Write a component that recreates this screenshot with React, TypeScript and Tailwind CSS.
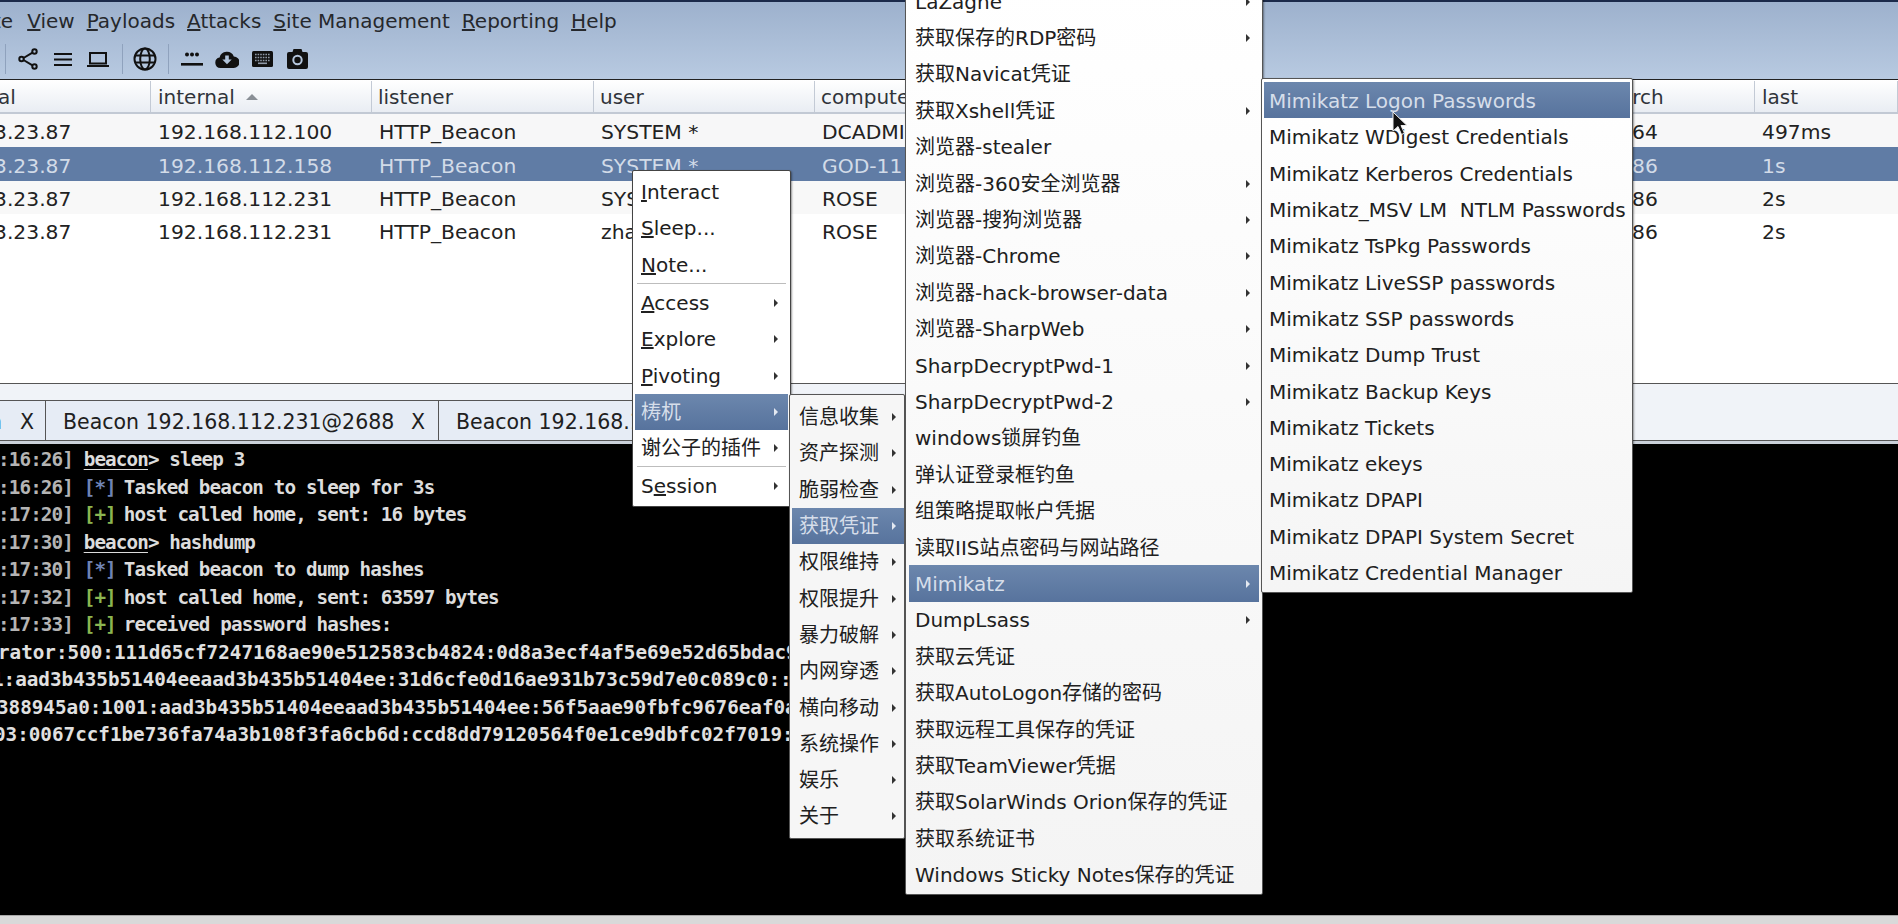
import type { ReactNode } from "react";

const FONT = { fontFamily: '"DejaVu Sans", "Noto Sans CJK SC", sans-serif' };

const columns = [
  { label: "al", w: "w-[151px]", pad: "pl-0 -ml-[2px]" },
  { label: "internal", w: "w-[221px]", pad: "pl-[7px]" },
  { label: "listener", w: "w-[222px]", pad: "pl-[6px]" },
  { label: "user", w: "w-[221px]", pad: "pl-[6px]" },
  { label: "computer", w: "w-[221px]", pad: "pl-[6px]" },
  { label: "note", w: "w-[221px]", pad: "pl-[6px]" },
  { label: "process", w: "w-[178px]", pad: "pl-[6px]" },
  { label: "pid", w: "w-[178px]", pad: "pl-[6px]" },
  { label: "arch", w: "w-[142px]", pad: "pl-[7px]" },
  { label: "last", w: "w-[143px]", pad: "pl-[7px]" },
];

const rows = [
  ["3.23.87", "192.168.112.100", "HTTP_Beacon", "SYSTEM *", "DCADMIN", "", "", "", "x64", "497ms"],
  ["3.23.87", "192.168.112.158", "HTTP_Beacon", "SYSTEM *", "GOD-11", "", "", "", "x86", "1s"],
  ["3.23.87", "192.168.112.231", "HTTP_Beacon", "SYSTEM *", "ROSE", "", "", "", "x86", "2s"],
  ["3.23.87", "192.168.112.231", "HTTP_Beacon", "zhangsan", "ROSE", "", "", "", "x86", "2s"],
];

function Arrow({ light }: { light?: boolean }) {
  return (
    <span
      className={
        "block border-y-[4px] border-y-transparent border-l-[4px] " +
        (light ? "border-l-[#e4e9f1]" : "border-l-[#333333]")
      }
    />
  );
}

type ItemProps = {
  label: ReactNode;
  arrow?: boolean;
  active?: boolean;
  pad: string;
};

function Item({ label, arrow, active, pad }: ItemProps) {
  return (
    <div
      className={
        "flex items-center justify-between whitespace-nowrap " +
        pad +
        (active ? " bg-gradient-to-b from-[#6c87ad] to-[#57739d] text-[#d6deea]" : " text-[#202020]")
      }
    >
      <span>{label}</span>
      {arrow ? <Arrow light={active} /> : null}
    </div>
  );
}

function Sep({ gap }: { gap?: boolean }) {
  return <div className={"mx-[2px] h-[1px] bg-[#bdbdbd] " + (gap ? "mb-[1px]" : "")} />;
}

const menu3 = [
  { t: "LaZagne", a: true },
  { t: "获取保存的RDP密码", a: true },
  { t: "获取Navicat凭证" },
  { t: "获取Xshell凭证", a: true },
  { t: "浏览器-stealer" },
  { t: "浏览器-360安全浏览器", a: true },
  { t: "浏览器-搜狗浏览器", a: true },
  { t: "浏览器-Chrome", a: true },
  { t: "浏览器-hack-browser-data", a: true },
  { t: "浏览器-SharpWeb", a: true },
  { t: "SharpDecryptPwd-1", a: true },
  { t: "SharpDecryptPwd-2", a: true },
  { t: "windows锁屏钓鱼" },
  { t: "弹认证登录框钓鱼" },
  { t: "组策略提取帐户凭据" },
  { t: "读取IIS站点密码与网站路径" },
  { t: "Mimikatz", a: true, active: true },
  { t: "DumpLsass", a: true },
  { t: "获取云凭证" },
  { t: "获取AutoLogon存储的密码" },
  { t: "获取远程工具保存的凭证" },
  { t: "获取TeamViewer凭据" },
  { t: "获取SolarWinds Orion保存的凭证" },
  { t: "获取系统证书" },
  { t: "Windows Sticky Notes保存的凭证" },
];

const menu2 = ["信息收集", "资产探测", "脆弱检查", "获取凭证", "权限维持", "权限提升", "暴力破解", "内网穿透", "横向移动", "系统操作", "娱乐", "关于"];

const menu4 = [
  "Mimikatz Logon Passwords",
  "Mimikatz WDigest Credentials",
  "Mimikatz Kerberos Credentials",
  "Mimikatz_MSV LM\u00a0 NTLM Passwords",
  "Mimikatz TsPkg Passwords",
  "Mimikatz LiveSSP passwords",
  "Mimikatz SSP passwords",
  "Mimikatz Dump Trust",
  "Mimikatz Backup Keys",
  "Mimikatz Tickets",
  "Mimikatz ekeys",
  "Mimikatz DPAPI",
  "Mimikatz DPAPI System Secret",
  "Mimikatz Credential Manager",
];

const logLine = "h-[27.5px] whitespace-pre text-[19.25px] leading-[27.5px] tracking-[-0.88px] text-[#dcdcdc]";

function Stamp({ t }: { t: string }) {
  return <span className="text-[#b4b4b4]">{t + "] "}</span>;
}

function Task({ t, text }: { t: string; text: string }) {
  return (
    <div className={logLine}>
      <Stamp t={t} />
      <span className="text-[#6f83b4]">[*]</span>
      <span className="ml-[8px]">{text}</span>
    </div>
  );
}

function Good({ t, text }: { t: string; text: string }) {
  return (
    <div className={logLine}>
      <Stamp t={t} />
      <span className="text-[#8bb650]">[+]</span>
      <span className="ml-[8px]">{text}</span>
    </div>
  );
}

function Input({ t, text }: { t: string; text: string }) {
  return (
    <div className={logLine}>
      <Stamp t={t} />
      <span className="underline underline-offset-[3px]">beacon</span>
      {"> " + text}
    </div>
  );
}

function Hash({ text, shift }: { text: string; shift: string }) {
  return (
    <div className={"h-[27.5px] whitespace-pre text-[19.25px] leading-[27.5px] text-[#e0e0e0] " + shift}>{text}</div>
  );
}

export default function App() {
  return (
    <div style={FONT} className="relative flex h-[924px] w-[1898px] flex-col overflow-hidden bg-white text-[20px] text-[#202020]">
      {/* menu + toolbar */}
      <div className="h-[80px] shrink-0 border-t-[2px] border-b-[1px] border-t-[#1b2a4a] border-b-[#222222] bg-gradient-to-b from-[#9db1cd] to-[#b8cae1]">
        <div className="flex h-[37px] items-center gap-[12px] text-[#26282c]">
          <span className="-ml-[7px] mr-[2px]">te</span>
          <span><u>V</u>iew</span>
          <span><u>P</u>ayloads</span>
          <span><u>A</u>ttacks</span>
          <span><u>S</u>ite Management</span>
          <span><u>R</u>eporting</span>
          <span><u>H</u>elp</span>
        </div>
        <div className="flex h-[40px] items-center">
          <div className="ml-[5px] h-[30px] w-[1px] bg-[#8fa2bd]" />
          <svg className="ml-[12px]" width="20" height="22" viewBox="0 0 20 22" fill="none" stroke="#111" strokeWidth="2">
            <circle cx="16.5" cy="3.5" r="2.2" />
            <circle cx="3.5" cy="11" r="2.2" />
            <circle cx="16.5" cy="18.5" r="2.2" />
            <path d="M5.5 10 14.5 4.6M5.5 12 14.5 17.4" />
          </svg>
          <svg className="ml-[16px]" width="18" height="13" viewBox="0 0 18 13" fill="#111">
            <rect y="0" width="18" height="2" />
            <rect y="5.5" width="18" height="2" />
            <rect y="11" width="18" height="2" />
          </svg>
          <svg className="ml-[15px]" width="22" height="15" viewBox="0 0 22 15" fill="none" stroke="#111" strokeWidth="2">
            <rect x="3" y="1" width="16" height="10.5" />
            <path d="M0 14h22" />
          </svg>
          <div className="ml-[13px] h-[30px] w-[1px] bg-[#8fa2bd]" />
          <svg className="ml-[10px]" width="24" height="24" viewBox="0 0 24 24" fill="none" stroke="#111" strokeWidth="2">
            <circle cx="12" cy="12" r="10.5" />
            <ellipse cx="12" cy="12" rx="4.8" ry="10.5" />
            <path d="M2 8.5h20M2 15.5h20" />
          </svg>
          <div className="ml-[11px] h-[30px] w-[1px] bg-[#8fa2bd]" />
          <svg className="ml-[12px]" width="22" height="14" viewBox="0 0 22 14" fill="#111">
            <circle cx="6" cy="2.5" r="2" />
            <circle cx="11" cy="2.5" r="2" />
            <circle cx="16" cy="2.5" r="2" />
            <rect x="0" y="11" width="22" height="2.6" />
          </svg>
          <svg className="ml-[12px]" width="24" height="17" viewBox="0 0 24 17">
            <path d="M5.5 17A5.3 5.3 0 0 1 4.6 6.5 7.5 7.5 0 0 1 18.8 5.4 5.8 5.8 0 0 1 18.6 17Z" fill="#111" />
            <path d="M10.2 4.5h3.6v4h2.9L12 13.2 7.3 8.5h2.9Z" fill="#b0c3da" />
          </svg>
          <svg className="ml-[13px]" width="21" height="16" viewBox="0 0 21 16">
            <rect width="21" height="16" rx="1.5" fill="#111" />
            <path d="M3 3.5h15M3 6.5h15M3 9.5h15" stroke="#8f9aa8" strokeWidth="1.4" strokeDasharray="1.6 1" />
            <rect x="6" y="11.5" width="9" height="1.6" fill="#8f9aa8" />
          </svg>
          <svg className="ml-[14px]" width="21" height="20" viewBox="0 0 21 20">
            <path d="M5.5 3 6.5 0h8l1 3H19a2 2 0 0 1 2 2v13a2 2 0 0 1-2 2H2a2 2 0 0 1-2-2V5a2 2 0 0 1 2-2Z" fill="#111" />
            <circle cx="10.5" cy="11" r="4.2" fill="none" stroke="#b5c6dc" strokeWidth="2" />
          </svg>
        </div>
      </div>

      {/* beacon table */}
      <div className="h-[304px] shrink-0 border-b-[1px] border-b-[#555555] bg-white">
        <div className="flex h-[34px] border-b-[2px] border-b-[#c2c9d4] bg-gradient-to-b from-white to-[#e9edf3] pt-[1px] text-[#30343a]">
          {columns.map((c) => (
            <div key={c.label} className={"flex shrink-0 items-center border-r-[1px] border-r-[#c3cad5] " + c.w}>
              <span className={c.pad}>{c.label}</span>
              {c.label === "internal" ? (
                <span className="ml-[11px] block border-x-[6px] border-b-[6px] border-x-transparent border-b-[#8a8f96]" />
              ) : null}
            </div>
          ))}
        </div>
        {rows.map((r, i) => (
          <div
            key={i}
            className={
              "flex h-[33.3px] items-center pt-[4px] text-[20.3px] " +
              (i === 1
                ? "bg-[#607ca5] text-[#d2dbe8]"
                : i === 0
                ? "bg-[#f7f7f8] text-[#222222]"
                : i === 2
                ? "bg-[#f8f8f8] text-[#222222]"
                : "bg-white text-[#222222]")
            }
          >
            {r.map((v, j) => (
              <div key={j} className={"shrink-0 whitespace-nowrap " + columns[j].w}>
                <span className={j === 0 ? "block -ml-[6px]" : "block pl-[7px]"}>{v}</span>
              </div>
            ))}
          </div>
        ))}
      </div>

      {/* tab strip */}
      <div className="h-[57px] shrink-0 bg-[#f0f3f8] pt-[16px] text-[20.5px]">
        <div className="flex h-[41px] items-stretch">
          <div className="flex w-[46px] shrink-0 items-center overflow-hidden border-t-[1px] border-r-[1px] border-b-[1px] border-[#555555] bg-[#e6ecf5] pt-[3px]">
            <span className="-ml-[11px] w-[31px] text-[#2b5cab]">n</span>
            <span>X</span>
          </div>
          <div className="flex w-[393px] shrink-0 items-center justify-between border-t-[1px] border-r-[1px] border-b-[1px] border-[#555555] bg-[#e6ecf5] pt-[3px] pr-[13px] pl-[17px]">
            <span>Beacon 192.168.112.231@2688</span>
            <span>X</span>
          </div>
          <div className="flex w-[393px] shrink-0 items-center justify-between overflow-hidden border-t-[1px] border-b-[1px] border-[#555555] bg-[#e6ecf5] pt-[3px] pl-[17px] whitespace-nowrap">
            <span>Beacon 192.168.112.231@3120</span>
          </div>
          <div className="flex-1 border-b-[1px] border-[#555555]" />
        </div>
      </div>

      {/* console */}
      <div className="flex-1 overflow-hidden border-t-[3px] border-t-[#c9d0d9] bg-black pt-[2px] font-bold" style={{ fontFamily: '"DejaVu Sans Mono", monospace' }}>
        <div className="-ml-[2px]">
          <Input t=":16:26" text="sleep 3" />
          <Task t=":16:26" text="Tasked beacon to sleep for 3s" />
          <Good t=":17:20" text="host called home, sent: 16 bytes" />
          <Input t=":17:30" text="hashdump" />
          <Task t=":17:30" text="Tasked beacon to dump hashes" />
          <Good t=":17:32" text="host called home, sent: 63597 bytes" />
          <Good t=":17:33" text="received password hashes:" />
        </div>
        <Hash shift="-ml-[2px]" text="rator:500:111d65cf7247168ae90e512583cb4824:0d8a3ecf4af5e69e52d65bdac9" />
        <Hash shift="-ml-[8px]" text="1:aad3b435b51404eeaad3b435b51404ee:31d6cfe0d16ae931b73c59d7e0c089c0:::" />
        <Hash shift="-ml-[3px]" text="388945a0:1001:aad3b435b51404eeaad3b435b51404ee:56f5aae90fbfc9676eaf0a" />
        <Hash shift="-ml-[6px]" text="03:0067ccf1be736fa74a3b108f3fa6cb6d:ccd8dd79120564f0e1ce9dbfc02f7019:" />
      </div>

      {/* status bar */}
      <div className="h-[9px] shrink-0 border-t-[1px] border-t-[#a8a8a8] bg-[#d9d9d9]" />

      {/* context menu */}
      <div className="absolute top-[170px] left-[632px] w-[159px] rounded-[2px] border-[1px] border-[#444444] bg-white px-[2px] pt-[3px] pb-[2px] shadow-[1px_1px_2px_rgba(0,0,0,0.4)]">
        <Item pad="h-[36.3px] pl-[6px] pr-[10px]" label={<><u>I</u>nteract</>} />
        <Item pad="h-[36.3px] pl-[6px] pr-[10px]" label={<><u>S</u>leep...</>} />
        <Item pad="h-[36.3px] pl-[6px] pr-[10px]" label={<><u>N</u>ote...</>} />
        <Sep gap />
        <Item pad="h-[36.3px] pl-[6px] pr-[10px]" label={<><u>A</u>ccess</>} arrow />
        <Item pad="h-[36.3px] pl-[6px] pr-[10px]" label={<><u>E</u>xplore</>} arrow />
        <Item pad="h-[36.3px] pl-[6px] pr-[10px]" label={<><u>P</u>ivoting</>} arrow />
        <Item pad="h-[36.3px] pl-[6px] pr-[10px]" label="梼杌" arrow active />
        <Item pad="h-[36.3px] pl-[6px] pr-[10px]" label="谢公子的插件" arrow />
        <Sep />
        <Item pad="h-[36.3px] pl-[6px] pr-[10px]" label={<>S<u>e</u>ssion</>} arrow />
      </div>

      {/* taowu submenu */}
      <div className="absolute top-[394px] left-[789px] w-[116px] rounded-[2px] border-[1px] border-[#555555] bg-[#f6f6f6] pt-[4px] pb-[3px] pl-[2px] shadow-[1px_1px_2px_rgba(0,0,0,0.4)]">
        {menu2.map((m) => (
          <Item key={m} pad="h-[36.3px] pl-[7px] pr-[8px]" label={m} arrow active={m === "获取凭证"} />
        ))}
      </div>

      {/* credentials submenu */}
      <div className="absolute top-[-18px] left-[905px] w-[358px] rounded-[2px] border-[1px] border-[#555555] bg-gradient-to-b from-white to-[#f4f4f4] px-[3px] pb-[1px] shadow-[1px_1px_2px_rgba(0,0,0,0.4)]">
        {menu3.map((m) => (
          <Item key={m.t} pad="h-[36.4px] pt-[1px] pl-[6px] pr-[9px]" label={m.t} arrow={m.a} active={m.active} />
        ))}
      </div>

      {/* mimikatz submenu */}
      <div className="absolute top-[78px] left-[1261px] w-[372px] rounded-[2px] border-[1px] border-[#555555] bg-gradient-to-b from-white to-[#f5f5f5] px-[2px] pt-[3px] pb-[2px] shadow-[1px_1px_2px_rgba(0,0,0,0.4)]">
        {menu4.map((m, i) => (
          <Item key={m} pad="h-[36.3px] pt-[2px] pl-[5px] pr-[5px]" label={m} active={i === 0} />
        ))}
      </div>

      {/* mouse pointer */}
      <svg className="absolute top-[111px] left-[1392px]" width="16" height="25" viewBox="0 0 16 25">
        <path d="M1 1v19l5-4.5 3.5 8 3-1.3-3.5-7.7H15Z" fill="#111" stroke="#eee" strokeWidth="1" />
      </svg>
    </div>
  );
}
